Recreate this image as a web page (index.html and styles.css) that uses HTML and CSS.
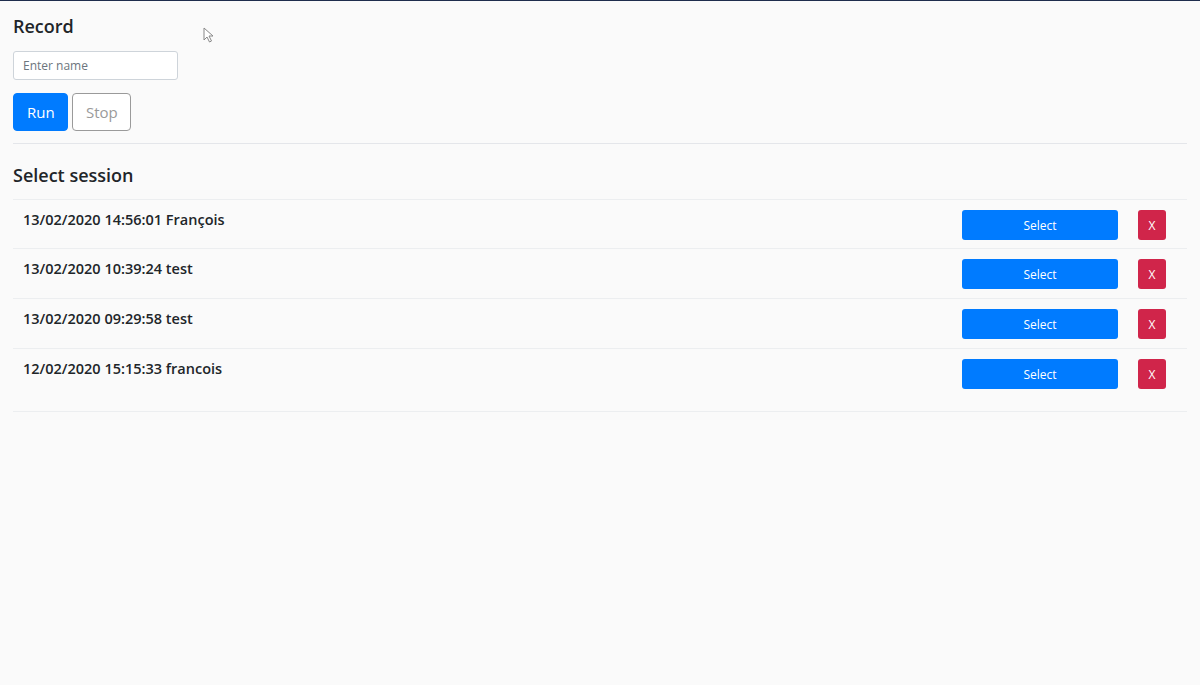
FILE: index.html
```html
<!DOCTYPE html>
<html lang="en">
<head>
<meta charset="utf-8">
<title>Record</title>
<link rel="stylesheet" href="styles.css">
</head>
<body>
<div class="page">
  <section class="record">
    <h2 class="title">Record</h2>
    <input class="name-input" type="text" placeholder="Enter name">
    <div class="actions">
      <button class="btn btn-run">Run</button>
      <button class="btn btn-stop">Stop</button>
    </div>
  </section>
  <hr class="sep">
  <section class="sessions">
    <h2 class="title title-session">Select session</h2>
    <ul class="list">
      <li class="row"><span class="label">13/02/2020 14:56:01 François</span><div class="row-btns"><button class="btn-select">Select</button><button class="btn-del">X</button></div></li>
      <li class="row"><span class="label">13/02/2020 10:39:24 test</span><div class="row-btns"><button class="btn-select">Select</button><button class="btn-del">X</button></div></li>
      <li class="row"><span class="label">13/02/2020 09:29:58 test</span><div class="row-btns"><button class="btn-select">Select</button><button class="btn-del">X</button></div></li>
      <li class="row row-last"><span class="label">12/02/2020 15:15:33 francois</span><div class="row-btns"><button class="btn-select">Select</button><button class="btn-del">X</button></div></li>
    </ul>
  </section>
  <svg class="cursor" width="12" height="16" viewBox="0 0 12 16"><path d="M1 1 L1 13 L4 10 L6.5 15 L8.5 14 L6 9 L10 9 Z" fill="#fff" stroke="#888" stroke-width="1"/></svg>
</div>
</body>
</html>
```
FILE: styles.css
```css
html, body {
  margin: 0;
  padding: 0;
}
body {
  background: #fafafa;
  font-family: "Open Sans", "Noto Sans", sans-serif;
  color: #212529;
  border-top: 1px solid #1f2d4d;
}
.page {
  position: relative;
  padding: 12px 13px 0 13px;
}
.title {
  margin: 0;
  font-size: 18px;
  font-weight: 600;
  line-height: 26px;
  color: #212529;
}
.name-input {
  display: block;
  box-sizing: border-box;
  margin-top: 12px;
  width: 165px;
  height: 29px;
  padding: 0 9px;
  font-family: inherit;
  font-size: 12px;
  border: 1px solid #ced4da;
  border-radius: 3px;
  background: #fff;
  color: #495057;
}
.name-input::placeholder {
  color: #6c757d;
}
.actions {
  display: flex;
  gap: 4px;
  margin-top: 13px;
}
.btn {
  box-sizing: border-box;
  height: 38px;
  font-family: inherit;
  font-size: 15px;
  border-radius: 4px;
  padding: 0 13px;
}
.btn-run {
  background: #007bff;
  border: 1px solid #007bff;
  color: #fff;
  width: 55px;
}
.btn-stop {
  background: #fff;
  border: 1px solid #9a9a9a;
  color: #9a9a9a;
  width: 59px;
}
.sep {
  margin: 12px 0 0 0;
  border: 0;
  border-top: 1px solid #e4e6ea;
}
.title-session {
  margin-top: 18px;
}
.list {
  list-style: none;
  margin: 11px 0 0 0;
  padding: 0;
  border-top: 1px solid #eceef0;
}
.row {
  display: flex;
  justify-content: space-between;
  align-items: flex-start;
  padding: 9px 21px 9px 10px;
  border-bottom: 1px solid #eceef0;
}
.row:first-child {
  padding-bottom: 8px;
}
.row-last {
  padding-bottom: 22px;
}
.label {
  font-size: 14.5px;
  font-weight: 600;
  line-height: 22px;
  color: #212529;
}
.row-btns {
  display: flex;
  gap: 20px;
  padding-top: 1px;
}
.btn-select, .btn-del {
  box-sizing: border-box;
  height: 30px;
  border: 0;
  border-radius: 3px;
  color: #fff;
  font-family: inherit;
  font-size: 12px;
}
.btn-select {
  width: 156px;
  background: #007bff;
}
.btn-del {
  width: 28px;
  background: #d0254a;
}
.cursor {
  position: absolute;
  left: 203px;
  top: 26px;
}
```
